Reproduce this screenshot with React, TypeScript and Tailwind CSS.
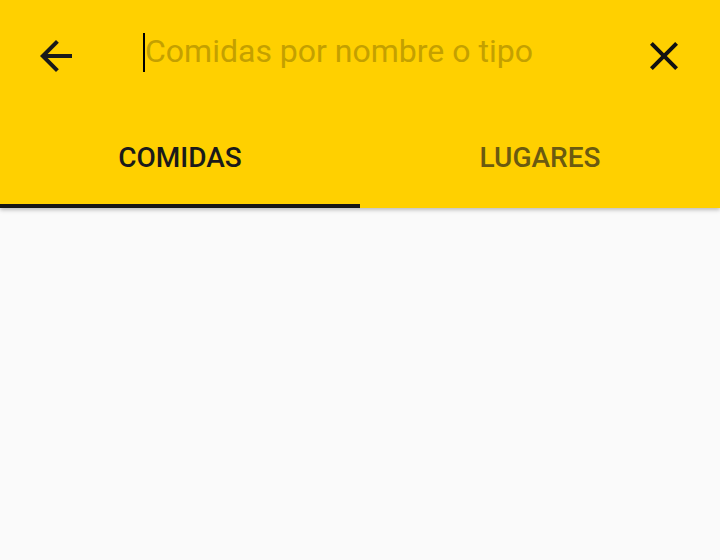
import React, { useState } from 'react'

const tabs = ['COMIDAS', 'LUGARES']

export default function App() {
  const [active, setActive] = useState(0)

  return (
    <div className="h-[560px] w-[720px] bg-[#fafafa] font-['Roboto',sans-serif] overflow-hidden">
      <header className="bg-[#ffd000] shadow-[0_2px_4px_rgba(0,0,0,0.25)] relative">
        {/* Toolbar */}
        <div className="h-[112px] flex items-center">
          <button className="w-[48px] h-[48px] ml-[32px] flex items-center justify-center">
            <svg width="48" height="48" viewBox="0 0 24 24" fill="#1a1a1a">
              <path d="M20 11H7.83l5.59-5.59L12 4l-8 8 8 8 1.41-1.41L7.83 13H20v-2z" />
            </svg>
          </button>
          <div className="flex-1 ml-[63px] mb-[8px] flex items-center h-[40px]">
            <span className="w-[2px] h-[39px] bg-black" />
            <span className="text-[32px] leading-[40px] text-[#c4a000] -mt-[2px]">
              Comidas por nombre o tipo
            </span>
          </div>
          <button className="w-[48px] h-[48px] mr-[32px] flex items-center justify-center">
            <svg width="48" height="48" viewBox="0 0 24 24" fill="#111">
              <path d="M19 6.41L17.59 5 12 10.59 6.41 5 5 6.41 10.59 12 5 17.59 6.41 19 12 13.41 17.59 19 19 17.59 13.41 12z" />
            </svg>
          </button>
        </div>

        {/* Tabs */}
        <div className="flex h-[96px]">
          {tabs.map((tab, i) => (
            <button
              key={tab}
              onClick={() => setActive(i)}
              className={`flex-1 flex flex-col ${i === active ? 'text-[#1a1a1a]' : 'text-[#6b5a10]'}`}
            >
              <span className="flex-1 flex items-center justify-center text-[28px] font-medium">
                {tab}
              </span>
              <span className={`h-[4px] w-full ${i === active ? 'bg-[#161616]' : 'bg-transparent'}`} />
            </button>
          ))}
        </div>
      </header>
    </div>
  )
}
